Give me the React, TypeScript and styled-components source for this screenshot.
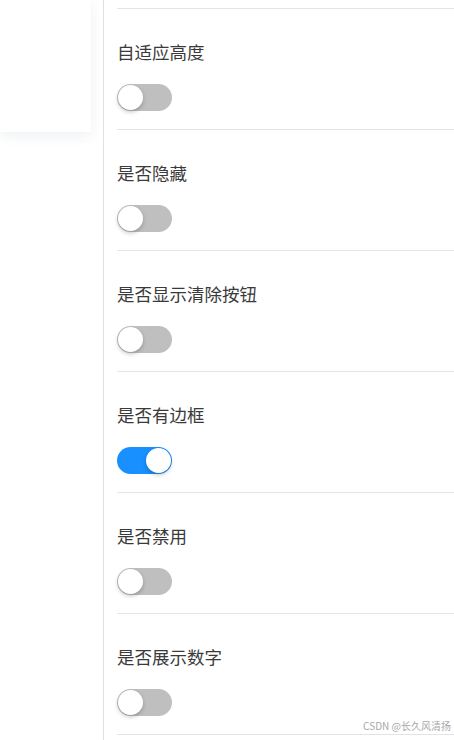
import { useState } from 'react';
import styled, { createGlobalStyle } from 'styled-components';

const GlobalStyle = createGlobalStyle`
  html, body {
    margin: 0;
    padding: 0;
    background: #fff;
    font-family: "Noto Sans CJK SC", "Noto Sans", sans-serif;
    color: #333;
    overflow: hidden;
  }
`;

const Page = styled.div`
  display: grid;
  grid-template-columns: 103px 1fr;
  height: 740px;
  position: relative;
`;

const LeftCol = styled.div`
  padding: 0;
`;

const PreviewCard = styled.div`
  width: 91px;
  height: 132px;
  background: #fff;
  box-shadow: 0 4px 12px rgba(30, 50, 100, 0.07);
`;

const RightCol = styled.div`
  border-left: 1px solid #e0e0e0;
  padding-left: 13px;
  overflow: hidden;
`;

const RowTail = styled.div`
  height: 8px;
  border-bottom: 1px solid #e4e4e4;
`;

const Row = styled.div`
  display: flex;
  flex-direction: column;
  align-items: flex-start;
  height: 121px;
  box-sizing: border-box;
  padding-top: 31px;
  border-bottom: 1px solid #e4e4e4;
`;

const Label = styled.div`
  font-size: 17.5px;
  line-height: 24px;
  height: 24px;
  color: #3a3a3a;
  margin-bottom: 20px;
`;

const Track = styled.button<{ $on: boolean }>`
  display: flex;
  justify-content: ${(p) => (p.$on ? 'flex-end' : 'flex-start')};
  align-items: center;
  width: 55px;
  height: 27px;
  padding: 1px;
  box-sizing: border-box;
  border: 0;
  border-radius: 14px;
  background: ${(p) => (p.$on ? '#1890ff' : '#bfbfbf')};
  cursor: pointer;
`;

const Knob = styled.span`
  width: 25px;
  height: 25px;
  border-radius: 50%;
  background: #fff;
  box-shadow: 0 2px 4px rgba(0, 0, 0, 0.22);
`;

const Watermark = styled.div`
  position: absolute;
  right: 3px;
  bottom: 8px;
  font-size: 10px;
  line-height: 12px;
  color: #a8a8a8;
  font-family: "Noto Sans CJK SC", "Liberation Sans", sans-serif;
`;

const items = [
  { label: '自适应高度', on: false },
  { label: '是否隐藏', on: false },
  { label: '是否显示清除按钮', on: false },
  { label: '是否有边框', on: true },
  { label: '是否禁用', on: false },
  { label: '是否展示数字', on: false },
];

const Switch = ({ initial }: { initial: boolean }) => {
  const [on, setOn] = useState(initial);
  return (
    <Track type='button' $on={on} onClick={() => { setOn(!on); }}>
      <Knob />
    </Track>
  );
};

export default function App() {
  return (
    <>
      <GlobalStyle />
      <Page>
        <LeftCol>
          <PreviewCard />
        </LeftCol>
        <RightCol>
          <RowTail />
          {items.map((item) => (
            <Row key={item.label}>
              <Label>{item.label}</Label>
              <Switch initial={item.on} />
            </Row>
          ))}
        </RightCol>
        <Watermark>CSDN @长久风清扬</Watermark>
      </Page>
    </>
  );
}
